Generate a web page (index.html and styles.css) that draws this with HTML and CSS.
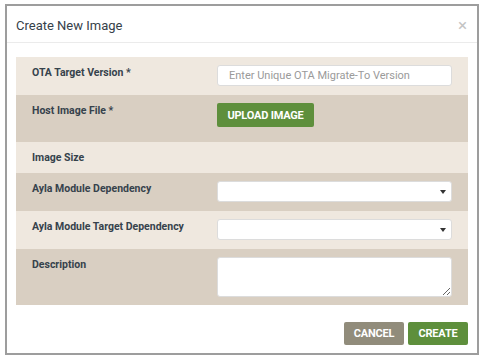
FILE: index.html
```html
<!DOCTYPE html>
<html>
  <head>
    <title>Create New Image</title>
    <link rel="stylesheet" href="styles.css">
  </head>
  <body>
    <div class="modal">
      <div class="modal-header">
        <div class="modal-title">Create New Image</div>
        <div class="close">&times;</div>
      </div>

      <div class="modal-body">
        <div class="row light">
          <div class="label">OTA Target Version *</div>
          <input class="field" type="text" placeholder="Enter Unique OTA Migrate-To Version" />
        </div>
        <div class="row dark row-upload">
          <div class="label">Host Image File *</div>
          <div><button class="btn btn-green btn-upload">UPLOAD IMAGE</button></div>
        </div>
        <div class="row light">
          <div class="label">Image Size</div>
          <div></div>
        </div>
        <div class="row dark">
          <div class="label">Ayla Module Dependency</div>
          <div class="select-wrap"><select class="field"></select></div>
        </div>
        <div class="row light">
          <div class="label">Ayla Module Target Dependency</div>
          <div class="select-wrap"><select class="field"></select></div>
        </div>
        <div class="row dark">
          <div class="label">Description</div>
          <textarea class="field area"></textarea>
        </div>
      </div>

      <div class="modal-footer">
        <button class="btn btn-gray">CANCEL</button>
        <button class="btn btn-green">CREATE</button>
      </div>
    </div>
  </body>
</html>
```

FILE: styles.css
```css
body {
  margin: 0;
  padding: 4px 5px 0;
  background-color: #fff;
  font-family: Roboto, "Liberation Sans", sans-serif;
}

.modal {
  box-sizing: border-box;
  width: 474px;
  height: 351px;
  border: 2px solid #9d9d9d;
  background-color: #fff;
}

.modal-header {
  height: 36px;
  padding: 0 10px 0 9px;
  display: flex;
  align-items: center;
  justify-content: space-between;
  border-bottom: 1px solid #ebebeb;
}

.modal-title {
  font-size: 13px;
  color: #36414a;
  padding-top: 3px;
}

.close {
  font-size: 17px;
  line-height: 1;
  color: #c4c4c4;
  padding-top: 2px;
}

.modal-body {
  padding: 14px 9px 0;
}

.row {
  display: grid;
  grid-template-columns: 185px 235px;
  padding: 8px 16px 9px;
}

.row.light {
  background-color: #efe8df;
}

.row.dark {
  background-color: #d9cfc2;
}

.row-upload {
  padding-bottom: 15px;
}

.row:last-child {
  padding-bottom: 8px;
}

.label {
  font-size: 10.5px;
  font-weight: 700;
  line-height: 13px;
  padding-top: 1px;
  color: #36424c;
}

.field {
  box-sizing: border-box;
  width: 235px;
  height: 21px;
  margin: 0;
  padding: 0 11px;
  border: 1px solid #dcdcdc;
  border-radius: 3px;
  background-color: #fff;
  font-family: Roboto, "Liberation Sans", sans-serif;
  font-size: 11px;
  color: #333;
  outline: none;
}

.field::placeholder {
  color: #9a9a9a;
}

.select-wrap {
  position: relative;
  height: 21px;
}

.select-wrap select {
  appearance: none;
  -webkit-appearance: none;
  display: block;
}

.select-wrap::after {
  content: "";
  position: absolute;
  right: 6px;
  top: 9px;
  border-left: 3px solid transparent;
  border-right: 3px solid transparent;
  border-top: 4px solid #333;
}

.area {
  height: 40px;
  display: block;
  resize: both;
}

.btn {
  height: 23px;
  padding: 0;
  border: none;
  border-radius: 2px;
  color: #fff;
  font-family: Roboto, "Liberation Sans", sans-serif;
  font-size: 11px;
  font-weight: 700;
  letter-spacing: -0.2px;
  cursor: pointer;
}

.btn-green {
  background-color: #5e8f3c;
}

.btn-gray {
  background-color: #918c7b;
}

.btn-upload {
  width: 97px;
  height: 24px;
}

.modal-footer {
  display: flex;
  justify-content: flex-end;
  gap: 4px;
  padding: 17px 9px 0;
}

.modal-footer .btn {
  width: 60px;
}
```
